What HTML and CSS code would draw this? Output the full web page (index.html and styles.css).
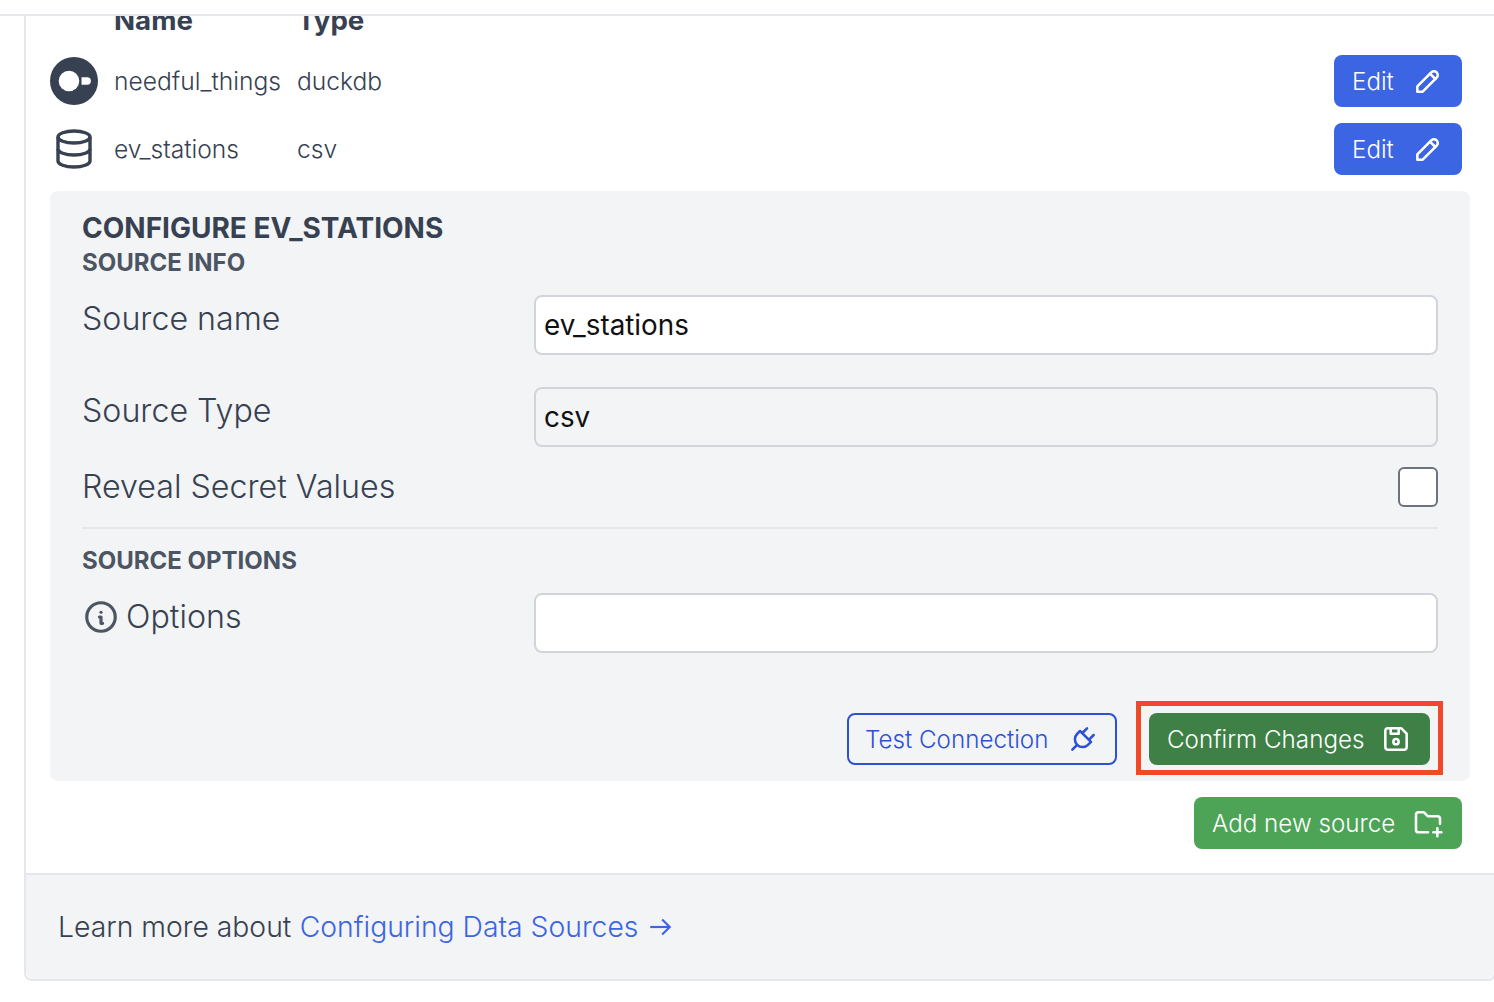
FILE: index.html
```html
<!DOCTYPE html>
<html>

<head>
    <meta charset="UTF-8">
    <meta name="viewport" content="width=device-width, initial-scale=1">
    <title>Sources</title>
    <link rel="stylesheet" href="styles.css">
</head>
<body>
    <div class="topbar"></div>
    <div class="card">
        <div class="cardBody">
            <div class="sources">
                <div class="srcHead"></div>
                <div class="srcHead">Name</div>
                <div class="srcHead">Type</div>
                <div class="srcHead"></div>

                <svg class="duck" viewBox="0 0 48 48"><circle cx="24" cy="24" r="24" fill="#374151"/><circle cx="19" cy="24" r="10.3" fill="#fff"/><path d="M31.5 20.3h5.7a3.7 3.7 0 0 1 0 7.4h-5.7z" fill="#fff"/></svg>
                <div class="srcName">needful_things</div>
                <div class="srcName">duckdb</div>
                <button class="btn blue">Edit
                    <svg class="ico" viewBox="0 0 24 24"><path d="M4 20h4l10.5 -10.5a2.828 2.828 0 1 0 -4 -4l-10.5 10.5v4"/><path d="M13.5 6.5l4 4"/></svg>
                </button>

                <svg class="db" viewBox="0 0 24 24"><path d="M12 6m-8 0a8 3 0 1 0 16 0a8 3 0 1 0 -16 0"/><path d="M4 6v6a8 3 0 0 0 16 0v-6"/><path d="M4 12v6a8 3 0 0 0 16 0v-6"/></svg>
                <div class="srcName">ev_stations</div>
                <div class="srcName">csv</div>
                <button class="btn blue">Edit
                    <svg class="ico" viewBox="0 0 24 24"><path d="M4 20h4l10.5 -10.5a2.828 2.828 0 1 0 -4 -4l-10.5 10.5v4"/><path d="M13.5 6.5l4 4"/></svg>
                </button>
            </div>

            <div class="panel">
                <h2>CONFIGURE EV_STATIONS</h2>
                <h3>SOURCE INFO</h3>
                <div class="field first">
                    <label>Source name</label>
                    <input type="text" value="ev_stations">
                </div>
                <div class="field">
                    <label>Source Type</label>
                    <input type="text" value="csv" class="off" disabled>
                </div>
                <div class="checkRow">
                    <label>Reveal Secret Values</label>
                    <span class="check"></span>
                </div>
                <hr>
                <h3>SOURCE OPTIONS</h3>
                <div class="field opts">
                    <label class="withInfo">
                        <svg class="info" viewBox="0 0 24 24"><path d="M3 12a9 9 0 1 0 18 0a9 9 0 0 0 -18 0"/><path d="M12 9h.01"/><path d="M11 12h1v4h1"/></svg>
                        Options
                    </label>
                    <input type="text">
                </div>
                <div class="panelBtns">
                    <button class="btn outline">Test Connection
                        <svg class="ico" viewBox="0 0 24 24"><path d="M9.785 6l8.215 8.215l-2.054 2.054a5.81 5.81 0 1 1 -8.215 -8.215l2.054 -2.054z"/><path d="M4 20l3.5 -3.5"/><path d="M15 4l-3.5 3.5"/><path d="M20 9l-3.5 3.5"/></svg>
                    </button>
                    <div class="marked">
                        <button class="btn darkgreen">Confirm Changes
                            <svg class="ico" viewBox="0 0 24 24"><path d="M6 4h10l4 4v10a2 2 0 0 1 -2 2h-12a2 2 0 0 1 -2 -2v-12a2 2 0 0 1 2 -2"/><path d="M12 14m-2 0a2 2 0 1 0 4 0a2 2 0 1 0 -4 0"/><path d="M14 4l0 4l-6 0l0 -4"/></svg>
                        </button>
                        <span class="redBox"></span>
                    </div>
                </div>
            </div>

            <div class="addRow">
                <button class="btn green">Add new source
                    <svg class="ico" viewBox="0 0 24 24"><path d="M12 19h-7a2 2 0 0 1 -2 -2v-11a2 2 0 0 1 2 -2h4l3 3h7a2 2 0 0 1 2 2v3.5"/><path d="M16 19h6"/><path d="M19 16v6"/></svg>
                </button>
            </div>
        </div>
        <div class="cardFoot">
            Learn more about <a href="#">Configuring Data Sources
            <svg class="arrow" viewBox="0 0 24 24"><path d="M3 12h18"/><path d="M14 5l7 7l-7 7"/></svg></a>
        </div>
    </div>
</body>

</html>
```

FILE: styles.css
```css
*{
    box-sizing:border-box;
}
html,body{
    overflow:hidden;
}
body{
    margin:0;
    height:1002px;
    background:#fff;
    font-family:Inter,"Liberation Sans",sans-serif;
    color:#374151;
}
.topbar{
    position:relative;
    z-index:2;
    height:16px;
    background:#fff;
    border-bottom:2px solid #e5e7eb;
}
.card{
    margin-left:24px;
    margin-right:-2px;
    height:965px;
    border:2px solid #e5e7eb;
    border-top:none;
    border-radius:0 0 8px 8px;
    display:flex;
    flex-direction:column;
}
.cardBody{
    flex:1;
    padding:0 32px 0 24px;
}
.sources{
    display:grid;
    grid-template-columns:64px 183px 1fr 128px;
    grid-auto-rows:52px;
    row-gap:16px;
    align-items:center;
    margin-top:-29px;
}
.srcHead{
    font-size:27.7px;
    font-weight:700;
    height:52px;
    line-height:52px;
    margin-bottom:-13px;
}
.srcName{
    font-size:24.6px;
    font-weight:300;
    margin-top:-1px;
}
.duck{
    width:48px;
    height:48px;
}
.db{
    width:48px;
    height:48px;
    fill:none;
    stroke:#374151;
    stroke-width:1.7;
}
.btn{
    display:inline-flex;
    align-items:center;
    justify-content:space-between;
    height:52px;
    padding:0 18px;
    border:none;
    border-radius:8px;
    font-family:inherit;
    font-size:24.2px;
    font-weight:300;
    color:#fff;
    white-space:nowrap;
}
.ico{
    width:32px;
    height:32px;
    fill:none;
    stroke:currentColor;
    stroke-width:1.9;
    stroke-linecap:round;
    stroke-linejoin:round;
}
.blue{
    width:128px;
    background:#3b65e2;
}
.darkgreen{
    width:281px;
    background:#3e8045;
}
.green{
    width:268px;
    background:#4da456;
}
.outline{
    width:270px;
    padding:0 16px;
    background:transparent;
    border:2px solid #2c52d3;
    color:#2c52d3;
}
.panel{
    margin:16px -8px 0 0;
    height:590px;
    padding:19px 32px 0;
    background:#f3f4f6;
    border-radius:8px;
}
h2{
    margin:0;
    font-size:28px;
    line-height:36px;
    font-weight:700;
}
h3{
    margin:0;
    font-size:24px;
    line-height:34px;
    font-weight:700;
    color:#4b5563;
}
.field{
    display:flex;
    justify-content:space-between;
    align-items:flex-start;
    margin-top:32px;
}
.field.first{
    margin-top:15px;
}
.field.opts{
    margin-top:15px;
}
label{
    font-size:32.2px;
    font-weight:300;
    line-height:48px;
}
.field input{
    width:904px;
    height:60px;
    padding:0 8px;
    background:#fff;
    border:2px solid #d1d5db;
    border-radius:8px;
    font-family:inherit;
    font-size:27.8px;
    font-weight:400;
    color:#111;
}
.field input.off{
    background:#f3f4f6;
    -webkit-text-fill-color:#111;
    opacity:1;
}
.checkRow{
    display:flex;
    justify-content:space-between;
    align-items:center;
    margin-top:20px;
    height:40px;
}
.check{
    width:40px;
    height:40px;
    background:#fff;
    border:2px solid #6b7280;
    border-radius:6px;
}
hr{
    margin:20px 0 15px;
    border:none;
    border-top:2px solid #e5e7eb;
}
.withInfo{
    display:flex;
    align-items:center;
    gap:6px;
}
.info{
    width:38px;
    height:38px;
    fill:none;
    stroke:#4b5563;
    stroke-width:2;
    stroke-linecap:round;
    stroke-linejoin:round;
}
.panelBtns{
    display:flex;
    justify-content:flex-end;
    gap:32px;
    margin:60px -8px 0 0;
    padding-right:16px;
}
.marked{
    position:relative;
    display:flex;
}
.redBox{
    position:absolute;
    left:-13px;
    top:-12px;
    width:307px;
    height:74px;
    border:5px solid #f04828;
}
.addRow{
    display:flex;
    justify-content:flex-end;
    margin-top:16px;
}
.cardFoot{
    height:106px;
    padding:0 0 0 32px;
    display:flex;
    align-items:center;
    gap:8.5px;
    background:#f3f4f6;
    border-top:2px solid #e5e7eb;
    border-radius:0 0 8px 8px;
    font-size:28.3px;
    font-weight:300;
}
.cardFoot a{
    color:#3b65e2;
    text-decoration:none;
    display:flex;
    align-items:center;
    gap:9px;
}
.arrow{
    width:26px;
    height:26px;
    fill:none;
    stroke:#3b65e2;
    stroke-width:2;
}
```
